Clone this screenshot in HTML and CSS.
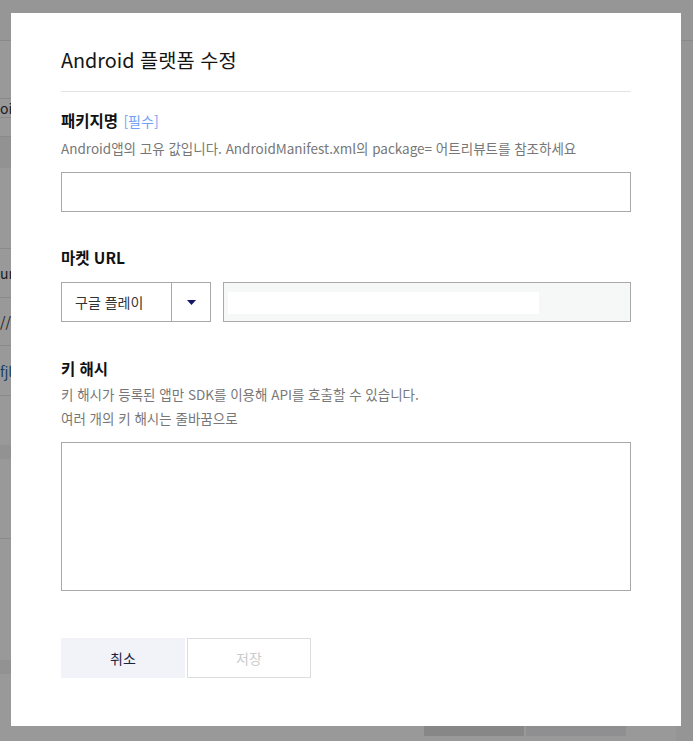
FILE: index.html
```html
<!DOCTYPE html>
<html lang="ko">
<head>
<meta charset="utf-8">
<title>Android 플랫폼 수정</title>
<link rel="stylesheet" href="styles.css">
</head>
<body>
<div class="page">
  <div class="page-head"></div>
  <div class="page-body">
    <div class="row r1"></div>
    <div class="row r2"><span class="bgtext">oid</span></div>
    <div class="row r2b"></div>
    <div class="band b1"></div>
    <div class="row r3"></div>
    <div class="row r4a"><span class="bgtext">un</span></div>
    <div class="row r4b"><span class="bgtext">//c</span></div>
    <div class="row r4c"><span class="bgtext link">fjl</span></div>
    <div class="row r5"></div>
    <div class="band b2"></div>
    <div class="row r6"></div>
    <div class="row r7"></div>
    <div class="band b3"></div>
  </div>
  <div class="page-actions">
    <span class="pa pa-dark">취소</span>
    <span class="pa pa-light">저장</span>
  </div>
</div>
<div class="overlay"></div>
<div class="modal">
  <h1 class="title">Android 플랫폼 수정</h1>
  <div class="field f-pkg">
    <div class="label">패키지명 <span class="req">[필수]</span></div>
    <p class="desc">Android앱의 고유 값입니다. AndroidManifest.xml의 package= 어트리뷰트를 참조하세요</p>
    <div class="input"></div>
  </div>
  <div class="field f-market">
    <div class="label">마켓 URL</div>
    <div class="market-row">
      <div class="select">
        <span class="select-text">구글 플레이</span>
        <span class="select-btn"><svg width="9" height="5" viewBox="0 0 9 5"><path d="M0 0H9L4.5 5Z" fill="#15156e"/></svg></span>
      </div>
      <div class="url-box"><div class="url-inner"></div></div>
    </div>
  </div>
  <div class="field f-hash">
    <div class="label">키 해시</div>
    <p class="desc desc-multi">키 해시가 등록된 앱만 SDK를 이용해 API를 호출할 수 있습니다.<br>여러 개의 키 해시는 줄바꿈으로</p>
    <div class="textarea"></div>
  </div>
  <div class="actions">
    <button class="btn btn-cancel">취소</button>
    <button class="btn btn-save">저장</button>
  </div>
</div>
</body>
</html>
```
FILE: styles.css
```css
html, body {
  margin: 0;
  padding: 0;
}
body {
  width: 693px;
  height: 741px;
  overflow: hidden;
  background: #ffffff;
  font-family: "Noto Sans CJK KR", "Noto Sans", sans-serif;
}
.page {
  position: relative;
  height: 741px;
  display: flex;
  flex-direction: column;
}
.page-head {
  height: 40px;
  border-bottom: 1px solid #e4e4e4;
  background: #fbfbfb;
}
.page-body {
  width: 665px;
  display: flex;
  flex-direction: column;
}
.row {
  border-bottom: 1px solid #e6e6e6;
  font-size: 14px;
  color: #333;
  display: flex;
  align-items: center;
  white-space: nowrap;
}
.bgtext {
  margin-left: 0;
}
.bgtext.link { color: #2a6aa8; }
.r1 { height: 57px; }
.r2 { height: 18px; }
.r2b { height: 18px; }
.band { background: #f4f4f4; }
.b1 { height: 31px; }
.r3 { height: 80px; }
.r4a { height: 48px; }
.r4b { height: 47px; }
.r4c { height: 49px; }
.r5 { height: 49px; border-bottom: none; }
.b2 { height: 14px; }
.r6 { height: 79px; }
.r7 { height: 121px; border-bottom: none; }
.b3 { height: 14px; }
.page-actions {
  position: absolute;
  left: 424px;
  top: 700px;
  display: flex;
  gap: 2px;
}
.pa {
  width: 100px;
  height: 36px;
  font-size: 14px;
  display: flex;
  align-items: center;
  justify-content: center;
  color: #333;
}
.pa-dark { background: #e2e2e2; }
.pa-light { background: #eeeef3; }
.overlay {
  position: fixed;
  inset: 0;
  background: rgba(0, 0, 0, 0.4);
}
.overlay::after {
  content: "";
  position: absolute;
  left: 676px;
  top: 41px;
  right: 0;
  bottom: 0;
  background: rgba(0, 0, 0, 0.03);
}
.modal {
  position: fixed;
  left: 11px;
  top: 13px;
  width: 670px;
  height: 713px;
  box-sizing: border-box;
  background: #ffffff;
  padding: 33px 50px 0;
  display: flex;
  flex-direction: column;
}
.title {
  margin: 0;
  font-size: 19.8px;
  font-weight: 400;
  line-height: 28px;
  color: #151515;
  padding-bottom: 17px;
  border-bottom: 1px solid #e4e4e4;
}
.field {
  display: flex;
  flex-direction: column;
}
.f-pkg { margin-top: 17px; }
.f-market { margin-top: 34px; }
.f-hash { margin-top: 35px; }
.label {
  font-size: 15.5px;
  font-weight: 700;
  line-height: 22px;
  color: #111;
}
.req {
  font-size: 14px;
  font-weight: 400;
  color: #72a2f5;
  margin-left: 1px;
}
.desc {
  margin: 5px 0 0;
  font-size: 13.5px;
  line-height: 22px;
  color: #777;
}
.desc-multi {
  margin-top: 3px;
  line-height: 24px;
}
.input {
  margin-top: 13px;
  height: 40px;
  box-sizing: border-box;
  border: 1px solid #a9a9a9;
}
.market-row {
  margin-top: 14px;
  display: flex;
  gap: 12px;
}
.select {
  width: 150px;
  height: 40px;
  box-sizing: border-box;
  border: 1px solid #a9a9a9;
  display: flex;
}
.select-text {
  flex: 1;
  padding-left: 13px;
  font-size: 14px;
  color: #333;
  display: flex;
  align-items: center;
  border-right: 1px solid #a9a9a9;
}
.select-btn {
  width: 38px;
  display: flex;
  align-items: center;
  justify-content: center;
}
.url-box {
  flex: 1;
  height: 40px;
  box-sizing: border-box;
  border: 1px solid #a9a9a9;
  background: #f6f7f7;
  padding: 9px 0 0 4px;
}
.url-inner {
  width: 311px;
  height: 22px;
  background: #ffffff;
}
.textarea {
  margin-top: 12px;
  height: 149px;
  box-sizing: border-box;
  border: 1px solid #a9a9a9;
}
.actions {
  margin-top: 47px;
  display: flex;
  gap: 2px;
}
.btn {
  width: 124px;
  height: 40px;
  box-sizing: border-box;
  font-family: inherit;
  font-size: 14px;
  padding: 0;
  cursor: pointer;
}
.btn-cancel {
  background: #f2f3f8;
  border: none;
  color: #1b2340;
}
.btn-save {
  background: #fff;
  border: 1px solid #dddddd;
  color: #cccccc;
}
```
